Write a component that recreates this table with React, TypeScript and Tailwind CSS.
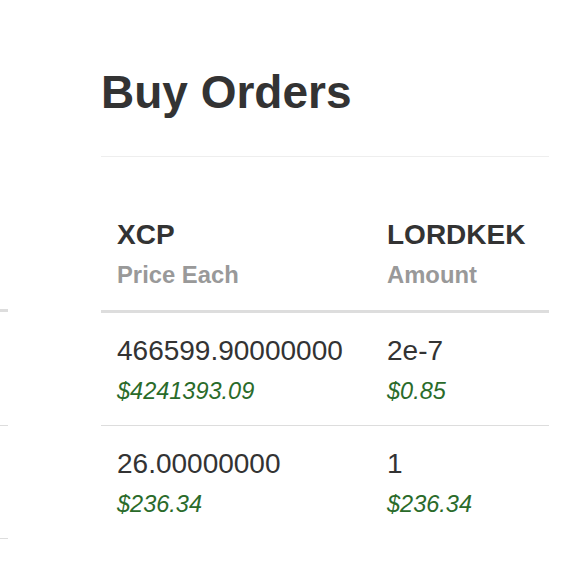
const orders = [
  { price: "466599.90000000", priceUsd: "$4241393.09", amount: "2e-7", amountUsd: "$0.85" },
  { price: "26.00000000", priceUsd: "$236.34", amount: "1", amountUsd: "$236.34" },
];

const Cell = ({ value, usd }: { value: string; usd: string }) => (
  <div className="px-4 pt-[18px] pb-[14px]">
    <div className="text-[28px] leading-[40px] text-[#333]">{value}</div>
    <div className="text-[23.5px] leading-[40px] italic text-[#2a6b2a]">{usd}</div>
  </div>
);

// the edge of the sell orders table, cut off by the viewport
const SellEdge = () => (
  <div className="w-[8px] shrink-0 pt-[309px]">
    <div className="h-[116px] border-t-[3px] border-[#ddd]" />
    <div className="h-[114px] border-t border-b border-[#ddd]" />
  </div>
);

export default function App() {
  return (
    <div className="flex min-h-[580px] bg-white font-['Liberation_Sans',Arial,sans-serif]">
      <SellEdge />
      <div className="ml-[93px] w-[448px] pt-[67px]">
        <h1 className="text-[46px] leading-[50px] font-bold text-[#333]">Buy Orders</h1>
        <hr className="mt-[39px] border-t border-[#eee]" />
        <div className="mt-[57px] grid grid-cols-[270px_1fr]">
          <div className="px-4 pb-[16px] font-bold">
            <div className="text-[28px] leading-[41px] text-[#333]">XCP</div>
            <div className="text-[23.8px] leading-[39px] text-[#999]">Price Each</div>
          </div>
          <div className="px-4 pb-[16px] font-bold">
            <div className="text-[28px] leading-[41px] text-[#333]">LORDKEK</div>
            <div className="text-[23.8px] leading-[39px] text-[#999]">Amount</div>
          </div>
          {orders.map((o, i) => (
            <div
              key={o.price}
              className={`col-span-2 grid grid-cols-[270px_1fr] border-[#ddd] ${
                i === 0 ? "border-t-[3px]" : "border-t"
              }`}
            >
              <Cell value={o.price} usd={o.priceUsd} />
              <Cell value={o.amount} usd={o.amountUsd} />
            </div>
          ))}
        </div>
      </div>
    </div>
  );
}
